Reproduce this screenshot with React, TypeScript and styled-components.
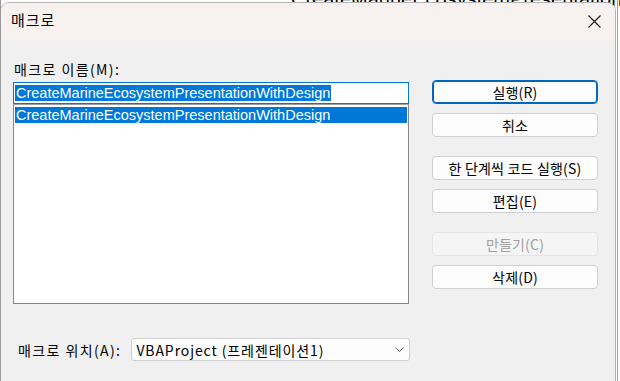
import React from 'react';
import styled, {createGlobalStyle} from "styled-components";

const GlobalStyle = createGlobalStyle`
  html, body {
    margin: 0;
    padding: 0;
    background: #ffffff;
    overflow: hidden;
  }
  body {
    font-family: "Liberation Sans", "Noto Sans CJK KR", sans-serif;
  }
`

const Desktop = styled.div`
  position: relative;
  width: 620px;
  height: 381px;
  overflow: hidden;
  background: #ffffff;
  border-left: 1px solid #9a9a9a;
  box-sizing: border-box;
`

// the document window that sits behind the dialog
const BackdropText = styled.div`
  position: absolute;
  top: -11px;
  left: 290px;
  font-size: 20px;
  line-height: 20px;
  color: #000;
  white-space: nowrap;
`

const BackdropEdge = styled.div`
  position: absolute;
  top: 0;
  right: 2px;
  width: 1px;
  height: 381px;
  background: #a0a0a0;
`

const Window = styled.div`
  position: absolute;
  left: 0;
  top: 3px;
  width: 614px;
  height: 390px;
  background: #f0f0f0;
  border-radius: 8px 8px 0 0;
  box-shadow: 0 0 0 1px #b4b4b4;
  overflow: hidden;
  font-family: "Noto Sans CJK KR", "Liberation Sans", sans-serif;
  color: #000;
`

const TitleBar = styled.div`
  height: 37px;
  background: #f7f1f0;
  display: flex;
  align-items: center;
  justify-content: space-between;
  padding: 0 14px 0 10px;
  font-size: 15px;
`

const Title = styled.span`
  line-height: 20px;
  margin-top: -3px;
  letter-spacing: 1px;
`

const Body = styled.div`
  padding: 20px 0 0 12px;
`

const MainRow = styled.div`
  display: flex;
  align-items: flex-start;
`

const LeftColumn = styled.div`
  width: 396px;
  display: flex;
  flex-direction: column;
`

const Label = styled.label`
  font-size: 14px;
  line-height: 18px;
  letter-spacing: 1.4px;
  margin-left: 1px;
  white-space: nowrap;
`

const TextBox = styled.div`
  margin-top: 4px;
  height: 22px;
  box-sizing: border-box;
  border: 1px solid #0078d7;
  background: #ffffff;
  padding: 2px 1px;
  display: flex;
  align-items: center;
`

const Selected = styled.span<{ $block?: boolean }>`
  background: #0078d7;
  color: #ffffff;
  font-family: "Liberation Sans", sans-serif;
  font-size: 14.5px;
  line-height: 16px;
  padding: 0 1px;
  display: ${p => p.$block ? "block" : "inline-block"};
  white-space: nowrap;
`

const ListBox = styled.div`
  height: 200px;
  box-sizing: border-box;
  border: 1px solid #828790;
  border-top-color: #a0a0a0;
  background: #ffffff;
  padding: 2px 1px 1px;
`

const RightColumn = styled.div`
  margin-left: 23px;
  margin-top: 20px;
  width: 166px;
  display: flex;
  flex-direction: column;
`

const Button = styled.button<{ $gap?: number, $focused?: boolean }>`
  height: 24px;
  margin-top: ${p => p.$gap || 0}px;
  box-sizing: border-box;
  border: 1px solid ${p => p.$focused ? "#0067c0" : "#d0d0d0"};
  box-shadow: ${p => p.$focused ? "inset 0 0 0 1px #0067c0" : "none"};
  border-radius: 4px;
  background: #fdfdfd;
  font-family: "Noto Sans CJK KR", "Liberation Sans", sans-serif;
  font-size: 14px;
  letter-spacing: 0.2px;
  color: #000;
  padding: 0;

  &:disabled {
    background: #f5f5f5;
    border-color: #e5e5e5;
    color: #a0a0a0;
  }
`

const BottomRow = styled.div`
  display: flex;
  align-items: center;
  margin-top: 34px;
  margin-left: 4px;
`

const Select = styled.div`
  margin-left: 10px;
  width: 279px;
  height: 23px;
  box-sizing: border-box;
  border: 1px solid #d0d0d0;
  border-radius: 3px;
  background: #fdfdfd;
  display: flex;
  align-items: center;
  justify-content: space-between;
  padding: 0 5px 0 4px;
  font-size: 14px;
  letter-spacing: 0.9px;
  white-space: nowrap;
`

const CloseIcon = () => (
    <svg width="13" height="13" viewBox="0 0 13 13">
        <path d="M0.5 0.5 L12.5 12.5 M12.5 0.5 L0.5 12.5" stroke="#1a1a1a" strokeWidth="1.1" fill="none"/>
    </svg>
)

const Chevron = () => (
    <svg width="9" height="6" viewBox="0 0 9 6">
        <path d="M0.5 0.5 L4.5 4.5 L8.5 0.5" stroke="#606060" strokeWidth="1" fill="none"/>
    </svg>
)

const macroName = "CreateMarineEcosystemPresentationWithDesign";

function App() {
    return (
        <>
            <GlobalStyle/>
            <Desktop>
                <BackdropText>CreateMarineEcosystemPresentation</BackdropText>
                <BackdropEdge/>
                <Window>
                    <TitleBar>
                        <Title>매크로</Title>
                        <CloseIcon/>
                    </TitleBar>
                    <Body>
                        <MainRow>
                            <LeftColumn>
                                <Label>매크로 이름(M):</Label>
                                <TextBox><Selected>{macroName}</Selected></TextBox>
                                <ListBox><Selected $block>{macroName}</Selected></ListBox>
                            </LeftColumn>
                            <RightColumn>
                                <Button $focused>실행(R)</Button>
                                <Button $gap={9}>취소</Button>
                                <Button $gap={19}>한 단계씩 코드 실행(S)</Button>
                                <Button $gap={9}>편집(E)</Button>
                                <Button $gap={19} disabled>만들기(C)</Button>
                                <Button $gap={9}>삭제(D)</Button>
                            </RightColumn>
                        </MainRow>
                        <BottomRow>
                            <Label>매크로 위치(A):</Label>
                            <Select>
                                <span>VBAProject (프레젠테이션1)</span>
                                <Chevron/>
                            </Select>
                        </BottomRow>
                    </Body>
                </Window>
            </Desktop>
        </>
    );
}

export default App;
